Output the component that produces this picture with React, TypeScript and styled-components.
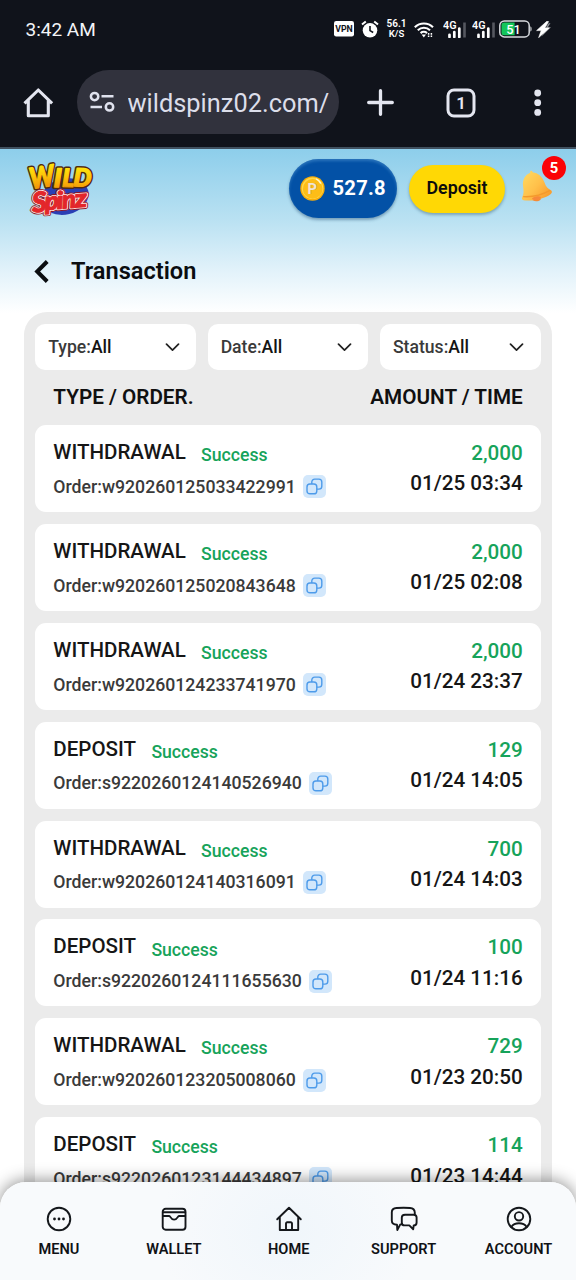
import React from "react";
import styled, { createGlobalStyle } from "styled-components";

const GlobalStyle = createGlobalStyle`
  * { box-sizing: border-box; }
  body { margin: 0; background: #fff; font-family: Roboto, "Liberation Sans", sans-serif; }
  svg { display: block; flex: none; }
`;

const Screen = styled.div`
  position: relative;
  width: 576px;
  height: 1280px;
  overflow: hidden;
  display: flex;
  flex-direction: column;
  background: #fff;
`;

const BrowserChrome = styled.div`
  flex: none;
  height: 149px;
  background: #10131b;
  border-bottom: 2px solid #40505f;
  display: flex;
  flex-direction: column;
`;

const StatusBar = styled.div`
  height: 58px;
  padding: 0 25px 0 25.5px;
  display: flex;
  align-items: center;
  justify-content: space-between;
`;

const Clock = styled.span`
  color: #f4f5f8;
  font-size: 19px;
  line-height: 24px;
  padding-top: 1px;
`;

const StatusIcons = styled.div`
  display: flex;
  align-items: center;
`;

const AddressBar = styled.div`
  height: 89px;
  padding: 0 24px 0 22px;
  display: flex;
  align-items: center;
`;

const UrlPill = styled.div`
  width: 262px;
  height: 64px;
  margin-left: 23px;
  margin-top: -1px;
  padding: 0 9px 0 12px;
  border-radius: 32px;
  background: #31323d;
  display: flex;
  align-items: center;
  gap: 12.5px;
`;

const UrlText = styled.span`
  width: 202px;
  overflow: hidden;
  white-space: nowrap;
  color: #dcdeea;
  font-size: 25.4px;
  line-height: 36px;
  padding-top: 1px;
`;

const BarActions = styled.div`
  flex: 1;
  display: flex;
  align-items: center;
  padding-left: 28px;
`;

const Page = styled.main`
  flex: 1;
  display: flex;
  flex-direction: column;
  background: linear-gradient(180deg, #8dceeb 0, #b9e1f2 70px, #e2f2fa 122px, #ffffff 164px);
`;

const TopBar = styled.header`
  height: 80px;
  flex: none;
  padding: 0 22px 0 25px;
  display: flex;
  align-items: center;
`;

const Balance = styled.div`
  width: 108px;
  height: 59px;
  margin: -2px 0 0 auto;
  padding-left: 11px;
  border-radius: 30px;
  background: #0351a6;
  box-shadow: 0 2px 3px rgba(20, 60, 100, 0.4), inset 0 2px 3px rgba(90, 160, 215, 0.45);
  display: flex;
  align-items: center;
  gap: 7.5px;
  color: #fff;
  font-size: 20.2px;
  font-weight: 700;
  letter-spacing: 0.25px;
`;

const DepositButton = styled.button`
  width: 96px;
  height: 48px;
  margin-left: 12px;
  padding: 0 0 3px;
  border: 0;
  border-radius: 24px;
  background: #ffd805;
  box-shadow: 0 2px 3px rgba(40, 80, 100, 0.4);
  color: #0c0c0c;
  font: 600 17.8px Roboto, sans-serif;
`;

const BellWrap = styled.div`
  position: relative;
  width: 34px;
  margin-left: 15px;
  margin-top: -4px;
  display: flex;
`;

const Badge = styled.span`
  position: absolute;
  left: 22px;
  top: -13px;
  width: 24px;
  height: 24px;
  border-radius: 50%;
  background: #fb0206;
  color: #fff;
  font-size: 14.8px;
  font-weight: 700;
  line-height: 25px;
  text-align: center;
`;

const TitleRow = styled.div`
  height: 83px;
  flex: none;
  padding: 2px 0 0 34px;
  display: flex;
  align-items: center;
  gap: 22px;
`;

const Title = styled.h1`
  margin: -2px 0 0;
  color: #0a0d10;
  font-size: 23.6px;
  font-weight: 600;
  line-height: 30px;
`;

const Panel = styled.section`
  flex: none;
  margin: 0 24px;
  padding: 12px 11.3px;
  border-radius: 23px;
  background: #ebebeb;
`;

const Filters = styled.div`
  display: grid;
  grid-template-columns: repeat(3, 1fr);
  gap: 11.6px;
`;

const Filter = styled.div`
  height: 46px;
  padding: 0 16.5px 0 13px;
  border-radius: 10px;
  background: #fff;
  display: flex;
  align-items: center;
  justify-content: space-between;
  color: #3a3a3a;
  font-size: 17.6px;
  font-weight: 500;
`;

const FilterValue = styled.span`
  color: #141414;
`;

const ListHead = styled.div`
  height: 55px;
  padding: 13.2px 18px 0 18px;
  display: flex;
  justify-content: space-between;
  color: #101010;
  font-size: 20.7px;
  font-weight: 600;
  line-height: 28px;
`;

const List = styled.div`
  display: flex;
  flex-direction: column;
  gap: 11.9px;
`;

const Card = styled.article`
  height: 87px;
  padding: 13px 18px 0 18px;
  border-radius: 11px;
  background: #fff;
  display: flex;
  justify-content: space-between;
`;

const NameRow = styled.div`
  height: 36px;
  display: flex;
  gap: 15.3px;
`;

const Kind = styled.span`
  color: #161616;
  font-size: 20.55px;
  font-weight: 500;
  line-height: 28px;
`;

const State = styled.span`
  padding-top: 3.1px;
  color: #16a35a;
  font-size: 17.65px;
  font-weight: 500;
  line-height: 28px;
`;

const OrderRow = styled.div`
  height: 24px;
  display: flex;
  align-items: flex-start;
  gap: 7.1px;
  color: #3a3a3a;
  font-size: 17.68px;
  font-weight: 500;
  line-height: 24px;
`;

const OrderNumber = styled.span`
  padding-top: 0.8px;
`;

const CopyBox = styled.span`
  width: 23px;
  height: 23px;
  margin-top: 1.2px;
  border-radius: 5px;
  background: #d2e7fb;
  display: flex;
  align-items: center;
  justify-content: center;
`;

const Right = styled.div`
  padding-top: 1px;
  display: flex;
  flex-direction: column;
  align-items: flex-end;
  gap: 2.3px;
  color: #161616;
  font-size: 20.65px;
  font-weight: 500;
  line-height: 28px;
`;

const Amount = styled.span`
  color: #16a35a;
`;

const BottomNav = styled.nav`
  position: absolute;
  left: 0;
  right: 0;
  bottom: 0;
  height: 98.5px;
  padding: 24px 0 0 1.5px;
  border-radius: 26px 26px 0 0;
  background: radial-gradient(ellipse 130px 110px at 50% 50%, #f0f6fb, #f8fafc);
  box-shadow: 0 -2px 16px rgba(0, 0, 0, 0.42);
  display: grid;
  grid-template-columns: repeat(5, 1fr);
`;

const NavItem = styled.div`
  display: flex;
  flex-direction: column;
  align-items: center;
  gap: 7.6px;
  color: #101216;
  font-size: 14.6px;
  font-weight: 600;
  line-height: 20px;
`;

const Spaced = styled.div<{ $left: number }>`
  margin-left: ${(p) => p.$left}px;
`;

const VpnIcon = () => (
  <svg width="20" height="16" viewBox="0 0 20 16">
    <rect width="20" height="15.5" rx="2.2" fill="#fff" />
    <text x="10" y="11.4" textAnchor="middle" textLength="17.5" lengthAdjust="spacingAndGlyphs" fontSize="9.6" fontWeight="700" fill="#10131b">VPN</text>
  </svg>
);

const AlarmIcon = () => (
  <svg width="18" height="18" viewBox="0 0 18 18">
    <circle cx="9" cy="10.3" r="7.3" fill="#fff" />
    <path d="M1 4.6 4.8 1.4M17 4.6 13.2 1.4" stroke="#fff" strokeWidth="2" fill="none" />
    <path d="M9 6v4.6l3.2 1.9" stroke="#10131b" strokeWidth="1.6" fill="none" />
  </svg>
);

const SpeedIcon = () => (
  <svg width="21" height="22" viewBox="0 0 21 22">
    <g fill="#fff" fontWeight="600" textAnchor="middle">
      <text x="10.5" y="9.2" fontSize="11" textLength="20" lengthAdjust="spacingAndGlyphs">56.1</text>
      <text x="10.5" y="18.9" fontSize="9.8" textLength="15.5" lengthAdjust="spacingAndGlyphs">K/S</text>
    </g>
  </svg>
);

const WifiIcon = () => (
  <svg width="20" height="17" viewBox="0 0 20 17">
    <g stroke="#fff" strokeWidth="2.1" fill="none">
      <path d="M.8 6.2a13 13 0 0 1 18.2 0" />
      <path d="M3.8 9.2a8.8 8.8 0 0 1 12.2 0" />
      <path d="M6.6 12.1a4.8 4.8 0 0 1 6.4 0" />
    </g>
    <path d="M7.6 13.4h4.4L9.8 16.4z" fill="#fff" />
    <path d="M14.6 12v4.2M17.4 12v4.2" stroke="#fff" strokeWidth="1.5" strokeDasharray="1.7 .7" />
  </svg>
);

const SignalIcon = () => (
  <svg width="23" height="18" viewBox="0 0 23 18">
    <text x="0" y="9.2" fontSize="11" fontWeight="600" fill="#fff" textLength="13.5" lengthAdjust="spacingAndGlyphs">4G</text>
    <path d="M6.5 14.8V17M11.3 12V17M16.3 8.5V17" stroke="#fff" strokeWidth="2.7" strokeLinecap="round" />
    <path d="M21.5 2.5v15" stroke="#555860" strokeWidth="2.6" />
  </svg>
);

const BatteryIcon = () => (
  <svg width="34" height="18" viewBox="0 0 34 18">
    <rect x=".8" y=".9" width="29.4" height="16" rx="4.5" fill="none" stroke="#d7dade" strokeWidth="1.5" />
    <path d="M5 2.6h10.6v12.6H5a2.5 2.5 0 0 1-2.5-2.5V5.1A2.5 2.5 0 0 1 5 2.6z" fill="#14c65a" />
    <text x="14.5" y="13.5" textAnchor="middle" fontSize="12.8" fontWeight="500" fill="#fff">51</text>
    <path d="M31.4 6.2c1.6.6 1.6 4.8 0 5.4z" fill="#d7dade" />
  </svg>
);

const BoltIcon = () => (
  <svg width="15" height="17" viewBox="0 0 15 17">
    <path d="M12.3 2.5 14.5 2l-2.6 4.3H15L5.5 15.500z" fill="#8b8e93" />
    <path d="M10.8.3.6 9.6h4.6L2.6 16.7 13.2 7H8.9L12.6.6z" fill="#fff" stroke="#fff" strokeWidth=".6" />
  </svg>
);

const BrowserHome = () => (
  <svg width="32" height="34" viewBox="0 0 32 34" fill="none" stroke="#e4e6f0" strokeWidth="3.1" strokeLinejoin="round">
    <path d="M2.5 17.3 16.3 4l13.8 13.3M6.3 14v15.7h20V14" />
  </svg>
);

const TuneIcon = () => (
  <svg width="26" height="22" viewBox="0 0 26 22" fill="none" stroke="#e0e2ee" strokeWidth="2.5">
    <circle cx="5.6" cy="5.6" r="3.7" />
    <path d="M12.5 5.3h12M1.5 15.9h11.5" />
    <circle cx="20.5" cy="15.9" r="3.7" />
  </svg>
);

const PlusIcon = () => (
  <svg width="27" height="27" viewBox="0 0 27 27">
    <path d="M13.5 1.7v23.6M1.7 13.5h23.6" stroke="#e4e6f0" strokeWidth="3.3" strokeLinecap="round" />
  </svg>
);

const TabsIcon = () => (
  <svg width="30" height="30" viewBox="0 0 30 30">
    <rect x="2" y="2" width="26" height="26" rx="6" fill="none" stroke="#e4e6f0" strokeWidth="3" />
    <text x="15" y="20.8" textAnchor="middle" fontSize="17" fontWeight="600" fill="#e4e6f0">1</text>
  </svg>
);

const DotsIcon = () => (
  <svg width="8" height="28" viewBox="0 0 8 28" fill="#e4e6f0">
    <circle cx="3.7" cy="4" r="3.4" />
    <circle cx="3.7" cy="13.7" r="3.4" />
    <circle cx="3.7" cy="23.4" r="3.4" />
  </svg>
);

const wildLetters = [
  { c: "W", x: 6, y: 30, r: -9, s: 29, w: 25 },
  { c: "I", x: 28.5, y: 28, r: 2, s: 26, w: 8 },
  { c: "L", x: 37, y: 27.5, r: 2, s: 25, w: 12 },
  { c: "D", x: 48, y: 27, r: 3, s: 25, w: 18 },
];

const spinzLetters = [
  { c: "S", x: 7.5, y: 53.5, s: 28, w: 15 },
  { c: "p", x: 20, y: 51, s: 25, w: 14.5 },
  { c: "i", x: 32, y: 50, s: 24, w: 7 },
  { c: "n", x: 37.5, y: 49.5, s: 25, w: 14 },
  { c: "z", x: 50, y: 48.5, s: 25, w: 12.5 },
];

const Wild = () => (
  <>
    {wildLetters.map((l) => (
      <text key={l.c} x={l.x} y={l.y} fontSize={l.s} textLength={l.w} lengthAdjust="spacingAndGlyphs" transform={`rotate(${l.r} ${l.x} ${l.y})`}>{l.c}</text>
    ))}
  </>
);

const Spinz = () => (
  <>
    {spinzLetters.map((l) => (
      <text key={l.c} x={l.x} y={l.y} fontSize={l.s} textLength={l.w} lengthAdjust="spacingAndGlyphs" transform={`rotate(-4 ${l.x} ${l.y})`}>{l.c}</text>
    ))}
  </>
);

const Logo = () => (
  <svg width="76" height="76" viewBox="0 -8 76 76" fontFamily="Lato, sans-serif" fontWeight="900" fontStyle="italic" strokeLinejoin="round">
    <defs>
      <linearGradient id="gold" x1="0" y1="7" x2="0" y2="29" gradientUnits="userSpaceOnUse">
        <stop offset="0" stopColor="#ffe80c" />
        <stop offset=".5" stopColor="#fec70a" />
        <stop offset="1" stopColor="#f39a08" />
      </linearGradient>
    </defs>
    <ellipse cx="40" cy="37.5" rx="24" ry="18" fill="#2a3fb4" transform="rotate(-14 40 37.5)" />
    <g fill="#4f2a10" stroke="#4f2a10" strokeWidth="4.2">
      <Wild />
    </g>
    <g fill="url(#gold)" stroke="url(#gold)" strokeWidth="1.2">
      <Wild />
    </g>
    <g fill="#8f1620" stroke="#8f1620" strokeWidth="4.4">
      <Spinz />
    </g>
    <g fill="#fff" stroke="#fbe9e6" strokeWidth="2.7">
      <Spinz />
    </g>
    <g fill="#e3262a" stroke="#e3262a" strokeWidth="1">
      <Spinz />
    </g>
  </svg>
);

const CoinIcon = () => (
  <svg width="25" height="25" viewBox="0 0 25 25">
    <circle cx="12.5" cy="12.5" r="12.2" fill="#f9ae0a" />
    <circle cx="12.5" cy="12.3" r="10.8" fill="#ffd84a" />
    <circle cx="12.7" cy="12.9" r="9.8" fill="#fdbd17" />
    <text x="12.8" y="18.3" textAnchor="middle" fontSize="14.5" fontWeight="700" fill="#c88b35">P</text>
    <text x="12.3" y="17.7" textAnchor="middle" fontSize="14.5" fontWeight="700" fill="#efe5d6">P</text>
    <path d="M16.5 3.2a10 10 0 0 1 4 3.8" stroke="#fff6c8" strokeWidth="1.5" fill="none" strokeLinecap="round" />
  </svg>
);

const BellIcon = () => (
  <svg width="34" height="36" viewBox="0 0 34 36">
    <defs>
      <linearGradient id="bell" x1="0" y1="0" x2="1" y2=".8">
        <stop offset="0" stopColor="#ffdc62" />
        <stop offset=".55" stopColor="#ffc04a" />
        <stop offset="1" stopColor="#f89a2c" />
      </linearGradient>
    </defs>
    <path d="M11 29c1 3.5 6.5 4.5 9.5 1.7l1.5-4z" fill="#f58b35" />
    <path d="M10.3 3.7C9.6 1.5 11.5 1 12.7 3.2 18 4.2 22 7 24.5 13.5c1.5 4.5 3.5 6.5 6.5 7.7 1.3.7 1.2 2.6-.2 3.7-5.8 4.6-18 7.6-27.3 6.3C2 31 1.6 29.3 2.3 28c1.8-4 1.3-6.5.8-10.5C2.2 10.5 5 5.8 10.3 3.7z" fill="url(#bell)" />
    <path d="M3.2 27.6c9 .6 18.5-1.5 26.8-6.2" stroke="#f49a2c" strokeWidth="1.4" fill="none" />
    <path d="M12 29.6c.8-2 6.5-3.4 9-1.7-.5 3-7.8 5-9 1.7z" fill="#f7893b" />
  </svg>
);

const BackIcon = () => (
  <svg width="15" height="23" viewBox="0 0 15 23">
    <path d="M13.2 1.5 3.2 11.500l10 10" stroke="#0a0d10" strokeWidth="4" fill="none" />
  </svg>
);

const Chevron = () => (
  <svg width="15" height="9" viewBox="0 0 15 9">
    <path d="m1.5 1.2 6 6 6-6" stroke="#222" strokeWidth="1.7" fill="none" strokeLinecap="round" strokeLinejoin="round" />
  </svg>
);

const CopyIcon = () => (
  <svg width="17" height="17" viewBox="0 0 17 17" fill="none" stroke="#4d9bea" strokeWidth="1.4">
    <rect x="1" y="6" width="9.8" height="9.8" rx="2.9" />
    <path d="M5.8 6V4a2.9 2.9 0 0 1 2.9-2.9h4.2A2.9 2.9 0 0 1 15.8 4v4.2a2.9 2.9 0 0 1-2.9 2.9h-2.1" />
  </svg>
);

const NavIcon = ({ children }: { children: React.ReactNode }) => (
  <svg width="28" height="26" viewBox="0 0 28 26" fill="none" stroke="#14171b" strokeWidth="1.9" strokeLinecap="round" strokeLinejoin="round">
    {children}
  </svg>
);

const navItems = [
  {
    label: "MENU",
    icon: (
      <>
        <circle cx="14" cy="13" r="11.3" />
        <path d="M9.5 13h.01M14 13h.01M18.5 13h.01" strokeWidth="2.8" />
      </>
    ),
  },
  {
    label: "WALLET",
    icon: (
      <>
        <rect x="2.7" y="2.7" width="22.8" height="21" rx="3" />
        <path d="M3 6.3h22.2M3 10h6.3c1.3 0 1.2 3.6 4.8 3.6S17.6 10 18.9 10h6.3" />
      </>
    ),
  },
  {
    label: "HOME",
    icon: <path d="M2.2 13.3 14 1.7l11.8 11.6M4.8 11v13h18.4V11M11 24v-6.5a1.2 1.2 0 0 1 1.2-1.2h3.6a1.2 1.2 0 0 1 1.2 1.2V24" />,
  },
  {
    label: "SUPPORT",
    icon: (
      <>
        <path d="M12 18.4H10.3L7.3 24l-.3-5.2c-3.2-.1-5.2-1.3-5.2-4.3V6.3C1.8 3 3.6 2.2 6.5 2c5-.4 9.5-.4 13.5 0 3.5.3 4.7 1.7 4.8 4.6v1.6" />
        <path d="M15 8.7h8.7c2 0 2.9.9 2.9 2.9v4.8c0 2-.9 3-2.9 3l-.5 3.8-3.9-3.8H14.6c-1.9 0-2.8-1-2.8-3v-4.8c0-2 1-2.9 3.2-2.9z" />
      </>
    ),
  },
  {
    label: "ACCOUNT",
    icon: (
      <>
        <circle cx="14" cy="13" r="11.3" />
        <circle cx="14" cy="10.3" r="4.2" />
        <path d="M6.3 21c2-3 4.6-3.7 7.7-3.7s5.7.7 7.7 3.7" />
      </>
    ),
  },
];

const transactions = [
  { kind: "WITHDRAWAL", order: "w920260125033422991", amount: "2,000", time: "01/25 03:34" },
  { kind: "WITHDRAWAL", order: "w920260125020843648", amount: "2,000", time: "01/25 02:08" },
  { kind: "WITHDRAWAL", order: "w920260124233741970", amount: "2,000", time: "01/24 23:37" },
  { kind: "DEPOSIT", order: "s9220260124140526940", amount: "129", time: "01/24 14:05" },
  { kind: "WITHDRAWAL", order: "w920260124140316091", amount: "700", time: "01/24 14:03" },
  { kind: "DEPOSIT", order: "s9220260124111655630", amount: "100", time: "01/24 11:16" },
  { kind: "WITHDRAWAL", order: "w920260123205008060", amount: "729", time: "01/23 20:50" },
  { kind: "DEPOSIT", order: "s9220260123144434897", amount: "114", time: "01/23 14:44" },
];

export default function App() {
  return (
    <Screen>
      <GlobalStyle />
      <BrowserChrome>
        <StatusBar>
          <Clock>3:42 AM</Clock>
          <StatusIcons>
            <VpnIcon />
            <Spaced $left={7}><AlarmIcon /></Spaced>
            <Spaced $left={7}><SpeedIcon /></Spaced>
            <Spaced $left={7}><WifiIcon /></Spaced>
            <Spaced $left={9.5}><SignalIcon /></Spaced>
            <Spaced $left={5.5}><SignalIcon /></Spaced>
            <Spaced $left={4.5}><BatteryIcon /></Spaced>
            <Spaced $left={3}><BoltIcon /></Spaced>
          </StatusIcons>
        </StatusBar>
        <AddressBar>
          <BrowserHome />
          <UrlPill>
            <TuneIcon />
            <UrlText>wildspinz02.com/</UrlText>
          </UrlPill>
          <BarActions>
            <PlusIcon />
            <Spaced $left={52}><TabsIcon /></Spaced>
            <Spaced $left={58}><DotsIcon /></Spaced>
          </BarActions>
        </AddressBar>
      </BrowserChrome>
      <Page>
        <TopBar>
          <Logo />
          <Balance>
            <CoinIcon />
            527.8
          </Balance>
          <DepositButton>Deposit</DepositButton>
          <BellWrap>
            <BellIcon />
            <Badge>5</Badge>
          </BellWrap>
        </TopBar>
        <TitleRow>
          <BackIcon />
          <Title>Transaction</Title>
        </TitleRow>
        <Panel>
          <Filters>
            {["Type:", "Date:", "Status:"].map((name) => (
              <Filter key={name}>
                <span>{name}<FilterValue>All</FilterValue></span>
                <Chevron />
              </Filter>
            ))}
          </Filters>
          <ListHead>
            <span>TYPE / ORDER.</span>
            <span>AMOUNT / TIME</span>
          </ListHead>
          <List>
            {transactions.map((t) => (
              <Card key={t.order}>
                <div>
                  <NameRow>
                    <Kind>{t.kind}</Kind>
                    <State>Success</State>
                  </NameRow>
                  <OrderRow>
                    <OrderNumber>Order:{t.order}</OrderNumber>
                    <CopyBox><CopyIcon /></CopyBox>
                  </OrderRow>
                </div>
                <Right>
                  <Amount>{t.amount}</Amount>
                  <span>{t.time}</span>
                </Right>
              </Card>
            ))}
          </List>
        </Panel>
      </Page>
      <BottomNav>
        {navItems.map((item) => (
          <NavItem key={item.label}>
            <NavIcon>{item.icon}</NavIcon>
            {item.label}
          </NavItem>
        ))}
      </BottomNav>
    </Screen>
  );
}
